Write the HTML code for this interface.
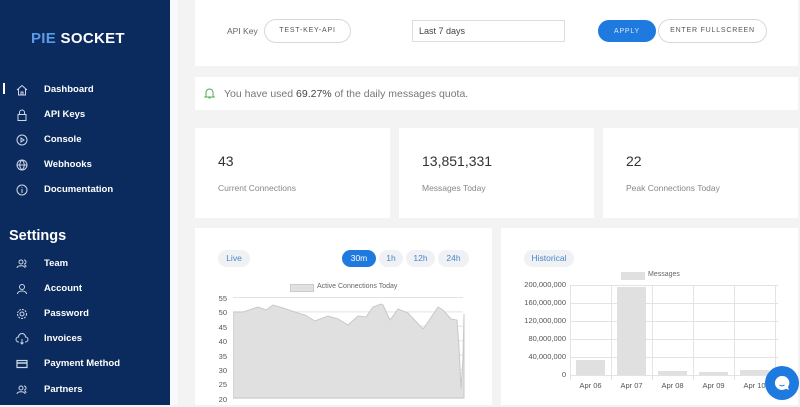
<!DOCTYPE html><html><head><meta charset="utf-8"><style>
*{margin:0;padding:0;box-sizing:border-box}
body{width:800px;height:405px;overflow:hidden;background:#f3f3f3;font-family:"Liberation Sans",sans-serif;position:relative}
.sb{position:absolute;left:0;top:0;width:170px;height:405px;background:#0b2b5e;color:#fff}
.logo{position:absolute;left:31px;top:30px;font-weight:bold;font-size:15px;letter-spacing:.3px}
.logo span{color:#5b9ae8}
.nav{position:absolute;left:0;font-size:9.5px;font-weight:bold;width:170px;height:14px}
.nav b{position:absolute;left:44px;top:1px}
.nav svg{position:absolute;left:15px;top:0}
.set{position:absolute;left:9px;top:228px;font-size:14.5px;font-weight:bold}
.card{position:absolute;background:#fff}
.pill{position:absolute;border:1px solid #d8d8d8;border-radius:14px;font-size:7px;letter-spacing:.8px;color:#555;text-align:center}
.num{position:absolute;left:23px;top:25px;font-size:14px;color:#333}
.lab{position:absolute;left:23px;top:55px;font-size:8.5px;color:#888}
.tag{position:absolute;background:#eff1f4;border-radius:9px;font-size:8.5px;color:#4a86c8;text-align:center;height:17px;line-height:17px}
.ax{position:absolute;font-size:7.5px;color:#555;text-align:right}
.xl{position:absolute;top:153px;font-size:7.5px;color:#555;width:41px;text-align:center;white-space:nowrap}
</style></head><body>
<div class="sb">
<div class="logo"><span>PIE</span> SOCKET</div>
<div style="position:absolute;left:3px;top:83px;width:1.5px;height:11px;background:#fff"></div>
<div class="nav" style="top:83px"><svg width="14" height="14" viewBox="0 0 14 14" fill="none" stroke="#cfd8e6" stroke-width="1"><path d="M2 7L7 2.5 12 7M3.5 6v6h7V6M6 12V9h2v3"/></svg><b>Dashboard</b></div>
<div class="nav" style="top:108px"><svg width="14" height="14" viewBox="0 0 14 14" fill="none" stroke="#cfd8e6" stroke-width="1"><rect x="3" y="6.5" width="8" height="6"/><path d="M4.5 6.5V4.5a2.5 2.5 0 0 1 5 0v2"/></svg><b>API Keys</b></div>
<div class="nav" style="top:133px"><svg width="14" height="14" viewBox="0 0 14 14" fill="none" stroke="#cfd8e6" stroke-width="1"><circle cx="7" cy="7" r="5"/><path d="M6 5v4l3-2z"/></svg><b>Console</b></div>
<div class="nav" style="top:158px"><svg width="14" height="14" viewBox="0 0 14 14" fill="none" stroke="#cfd8e6" stroke-width="1"><circle cx="7" cy="7" r="5"/><path d="M2 7h10M7 2c-3 3-3 7 0 10M7 2c3 3 3 7 0 10"/></svg><b>Webhooks</b></div>
<div class="nav" style="top:183px"><svg width="14" height="14" viewBox="0 0 14 14" fill="none" stroke="#cfd8e6" stroke-width="1"><circle cx="7" cy="7" r="5"/><path d="M7 6v4M7 4v.8"/></svg><b>Documentation</b></div>
<div class="set">Settings</div>
<div class="nav" style="top:257px"><svg width="14" height="14" viewBox="0 0 14 14" fill="none" stroke="#cfd8e6" stroke-width="1"><circle cx="6" cy="5" r="2"/><path d="M2 11c0-3 8-3 8 0M9 3a2 2 0 0 1 0 4M11 10c0-1-.5-2-1.5-2"/></svg><b>Team</b></div>
<div class="nav" style="top:282px"><svg width="14" height="14" viewBox="0 0 14 14" fill="none" stroke="#cfd8e6" stroke-width="1"><circle cx="7" cy="5" r="2.5"/><path d="M2.5 12c0-4 9-4 9 0"/></svg><b>Account</b></div>
<div class="nav" style="top:307px"><svg width="14" height="14" viewBox="0 0 14 14" fill="none" stroke="#cfd8e6" stroke-width="1"><circle cx="7" cy="7" r="2"/><circle cx="7" cy="7" r="4.5" stroke-dasharray="2 1"/></svg><b>Password</b></div>
<div class="nav" style="top:332px"><svg width="14" height="14" viewBox="0 0 14 14" fill="none" stroke="#cfd8e6" stroke-width="1"><path d="M4 10H3.5a2.5 2.5 0 0 1 0-5 3.5 3.5 0 0 1 7 0 2.5 2.5 0 0 1 0 5H10M7 7v5M5.5 10.5L7 12l1.5-1.5"/></svg><b>Invoices</b></div>
<div class="nav" style="top:357px"><svg width="14" height="14" viewBox="0 0 14 14" fill="none" stroke="#cfd8e6" stroke-width="1.2"><rect x="2" y="3.5" width="10" height="7"/><path d="M2 6h10" stroke-width="1.5"/></svg><b>Payment Method</b></div>
<div class="nav" style="top:383px"><svg width="14" height="14" viewBox="0 0 14 14" fill="none" stroke="#cfd8e6" stroke-width="1"><circle cx="6" cy="5" r="2"/><path d="M2 11c0-3 8-3 8 0M9 3a2 2 0 0 1 0 4M11 10c0-1-.5-2-1.5-2"/></svg><b>Partners</b></div>
</div>
<div style="position:absolute;left:170px;top:0;width:8px;height:405px;background:#f7f9fc"></div>

<div class="card" style="left:195px;top:0;width:603px;height:66px">
<div style="position:absolute;left:32px;top:26px;font-size:8.5px;color:#666">API Key</div>
<div class="pill" style="left:69px;top:19px;width:87px;height:24px;line-height:22px">TEST-KEY-API</div>
<div style="position:absolute;left:217px;top:20px;width:153px;height:22px;border:1px solid #ddd;font-size:9px;color:#444;padding-left:6px;line-height:21px">Last 7 days</div>
<div class="pill" style="left:403px;top:20px;width:58px;height:22px;line-height:22px;background:#1f7ae0;border-color:#1f7ae0;color:#dce9fa">APPLY</div>
<div class="pill" style="left:463px;top:19px;width:109px;height:24px;line-height:22px">ENTER FULLSCREEN</div>
</div>
<div class="card" style="left:195px;top:77px;width:603px;height:33px">
<svg style="position:absolute;left:9px;top:10px" width="11" height="12" viewBox="0 0 11 12" fill="none" stroke="#4caf50" stroke-width="1"><path d="M2 9V5.5a3.5 3.5 0 0 1 7 0V9l1 1H1zM4.5 11h2"/></svg>
<div style="position:absolute;left:29px;top:11px;font-size:10.5px;color:#777">You have used <span style="color:#444">69.27%</span> of the daily messages quota.</div>
</div>
<div class="card" style="left:195px;top:128px;width:195px;height:90px"><div class="num">43</div><div class="lab">Current Connections</div></div>
<div class="card" style="left:399px;top:128px;width:195px;height:90px"><div class="num">13,851,331</div><div class="lab">Messages Today</div></div>
<div class="card" style="left:603px;top:128px;width:195px;height:90px"><div class="num">22</div><div class="lab">Peak Connections Today</div></div>

<div class="card" style="left:195px;top:228px;width:297px;height:177px">
<div class="tag" style="left:23px;top:22px;width:32px">Live</div>
<div class="tag" style="left:147px;top:22px;width:34px;background:#1f7ae0;color:#fff">30m</div>
<div class="tag" style="left:184px;top:22px;width:24px">1h</div>
<div class="tag" style="left:211px;top:22px;width:29px">12h</div>
<div class="tag" style="left:243px;top:22px;width:31px">24h</div>
<div style="position:absolute;left:95px;top:56px;width:24px;height:8px;background:#e0e0e0;border:1px solid #ccc"></div>
<div style="position:absolute;left:122px;top:55px;font-size:7px;color:#666">Active Connections Today</div>
<div class="ax" style="left:14px;top:64px;width:18px;line-height:14.4px">55<br>50<br>45<br>40<br>35<br>30<br>25<br>20</div>
<svg style="position:absolute;left:38px;top:69px" width="232" height="104"><g stroke="#e3e3e3" stroke-width="1"><path d="M0 .5H230M0 14.9H230M0 29.3H230M0 43.7H230M0 58.1H230M0 72.5H230M0 86.9H230M0 101.3H230"/></g>
<path d="M0 15 L10 15 L25 10 L33 13 L40 8 L50 11 L68 17 L72 18 L82 24 L95 19 L105 22 L115 28 L125 19 L133 20 L140 10 L148 7 L150 8 L157 23 L165 12 L175 16 L190 32 L195 25 L205 10 L210 13 L218 22 L224 23 L226 50 L228 92 L230 60 L231 17 L231 101 L0 101Z" fill="#e0e0e0" stroke="#c8c8c8" stroke-width="1"/></svg>
</div>

<div class="card" style="left:501px;top:228px;width:297px;height:177px">
<div class="tag" style="left:23px;top:22px;width:50px">Historical</div>
<div style="position:absolute;left:120px;top:44px;width:24px;height:8px;background:#e0e0e0"></div>
<div style="position:absolute;left:147px;top:43px;font-size:7px;color:#666">Messages</div>
<div class="ax" style="left:0;top:48px;width:65px;line-height:18.1px">200,000,000<br>160,000,000<br>120,000,000<br>80,000,000<br>40,000,000<br>0</div>
<svg style="position:absolute;left:69px;top:57px" width="210" height="100"><g stroke="#e3e3e3"><path d="M0 .5H208M0 18.5H208M0 36.5H208M0 54.5H208M0 72.5H208M0 90.5H208M.5 0V95M41.5 0V95M82.5 0V95M123.5 0V95M164.5 0V95M205.5 0V95"/></g>
<rect x="6" y="75" width="29" height="15" fill="#e0e0e0"/><rect x="47" y="2" width="29" height="88" fill="#e0e0e0"/><rect x="88" y="86" width="29" height="4" fill="#e0e0e0"/><rect x="129" y="87" width="29" height="3" fill="#e0e0e0"/><rect x="170" y="85" width="29" height="5" fill="#e0e0e0"/></svg>
<div class="xl" style="left:69px">Apr 06</div>
<div class="xl" style="left:110px">Apr 07</div>
<div class="xl" style="left:151px">Apr 08</div>
<div class="xl" style="left:192px">Apr 09</div>
<div class="xl" style="left:233px">Apr 10</div>
</div>
<div style="position:absolute;left:765px;top:366px;width:34px;height:34px;border-radius:50%;background:#1f7ae0"></div>
<svg style="position:absolute;left:773px;top:374px" width="18" height="18" viewBox="0 0 18 18"><path d="M9 2a7 7 0 1 0 4 12.7L16 16l-1-3A7 7 0 0 0 9 2z" fill="#fff"/><path d="M6.5 11c1.5 1 3.5 1 5 0" stroke="#1f7ae0" fill="none"/></svg>
</body></html>
